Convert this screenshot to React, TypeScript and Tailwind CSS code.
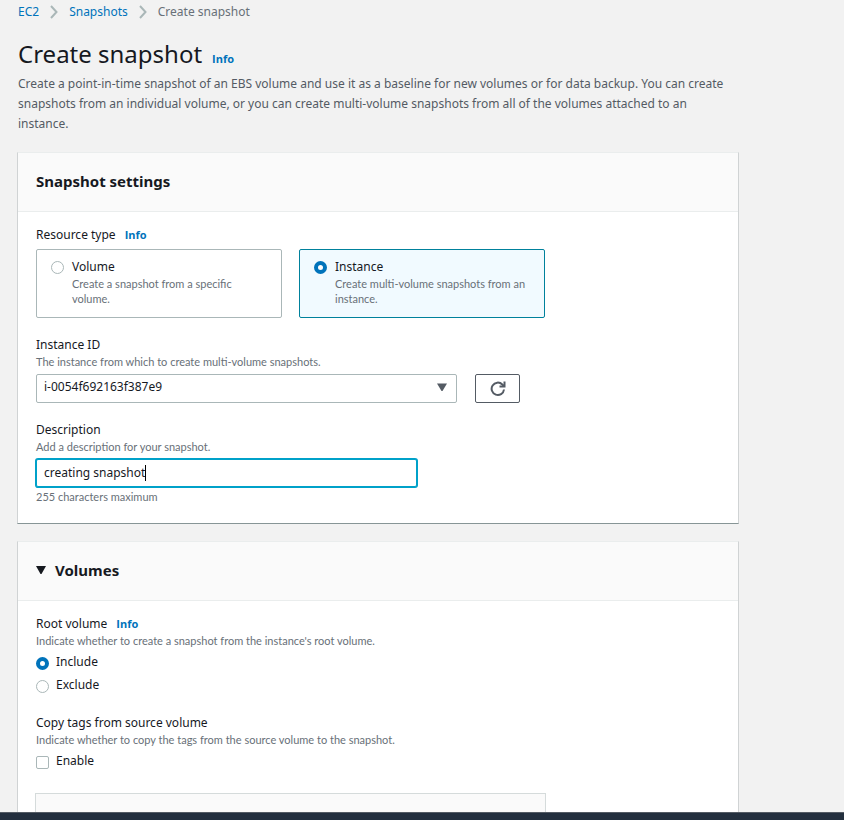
import { useState, type ReactNode } from "react";

function Info() {
  return (
    <a href="#info" className="font-['Open_Sans',sans-serif] text-[11px] leading-4 font-bold text-[#0073bb]">
      Info
    </a>
  );
}

function Chevron() {
  return (
    <svg aria-hidden="true" viewBox="0 0 8 14" className="h-[14px] w-2 fill-none stroke-[#aab7b8] stroke-2">
      <path d="M1 1l5.5 6L1 13" />
    </svg>
  );
}

function Hint({ children }: { children: ReactNode }) {
  return (
    <p className="font-['Lato',sans-serif] text-[11px] leading-[15px] text-[#687078]">{children}</p>
  );
}

const radioClass =
  "m-0 size-[13px] shrink-0 appearance-none rounded-full border border-[#aab7b8] bg-white checked:border-4 checked:border-[#0073bb]";

type TileProps = {
  title: string;
  hint: string;
  checked: boolean;
  onSelect: () => void;
};

function Tile({ title, hint, checked, onSelect }: TileProps) {
  return (
    <label
      className={
        checked
          ? "flex h-[69px] flex-1 gap-2 rounded-xs border border-[#00819c] bg-[#f1faff] py-2 pr-3 pl-[14px]"
          : "flex h-[69px] flex-1 gap-2 rounded-xs border border-[#aab7b8] bg-white py-2 pr-3 pl-[14px]"
      }
    >
      <span className="flex h-4 items-end">
        <input type="radio" name="resource" className={radioClass} checked={checked} onChange={onSelect} />
      </span>
      <span>
        <span className="block leading-[18px]">{title}</span>
        <span className="block font-['Lato',sans-serif] text-[11px] leading-[15px] text-[#687078]">{hint}</span>
      </span>
    </label>
  );
}

const cardClass =
  "border border-t-[#eaeded] border-r-[#d0d3d4] border-b-[#879596] border-l-[#d0d3d4] bg-white";
const headClass = "flex h-[59px] items-center border-b border-[#eaeded] bg-[#fafafa] px-[18px] pb-[3px]";

export default function App() {
  const [resource, setResource] = useState("instance");
  const [root, setRoot] = useState("include");
  const [description, setDescription] = useState("creating snapshot");

  return (
    <div className="flex h-screen flex-col bg-[#f2f2f2] font-['Noto_Sans',sans-serif] text-[12px] leading-[18px] text-[#16191f]">
      <div className="min-h-0 flex-1 overflow-hidden">
        <main className="mr-[105px] ml-[17px] pt-[3px]">
          <nav aria-label="Breadcrumb" className="flex items-center gap-[11px] pl-px text-[#687078]">
            <a href="#ec2" className="text-[#0073bb]">EC2</a>
            <Chevron />
            <a href="#snapshots" className="text-[#0073bb]">Snapshots</a>
            <Chevron />
            <span>Create snapshot</span>
          </nav>
          <header className="pt-[15px] pl-px">
            <div className="flex items-baseline gap-[10px]">
              <h1 className="text-[24px] leading-9">Create snapshot</h1>
              <Info />
            </div>
            <p className="mt-[2px] leading-[20px] text-[#545b64]">
              Create a point-in-time snapshot of an EBS volume and use it as a baseline for new volumes or for data
              backup. You can create snapshots from an individual volume, or you can create multi-volume snapshots from
              all of the volumes attached to an instance.
            </p>
          </header>

          <section className={`${cardClass} mt-[18px]`}>
            <div className={headClass}>
              <h2 className="text-[15px] font-bold">Snapshot settings</h2>
            </div>
            <div className="px-[18px] pt-[14px] pb-[19px]">
              <fieldset>
                <legend className="flex items-baseline gap-[9px]">
                  Resource type <Info />
                </legend>
                <div className="mt-[5px] flex max-w-[509px] gap-[17px]">
                  <Tile
                    title="Volume"
                    hint="Create a snapshot from a specific volume."
                    checked={resource === "volume"}
                    onSelect={() => setResource("volume")}
                  />
                  <Tile
                    title="Instance"
                    hint="Create multi-volume snapshots from an instance."
                    checked={resource === "instance"}
                    onSelect={() => setResource("instance")}
                  />
                </div>
              </fieldset>

              <div className="mt-[18px]">
                <label htmlFor="instance">Instance ID</label>
                <Hint>The instance from which to create multi-volume snapshots.</Hint>
                <div className="mt-[5px] flex gap-[18px]">
                  <div className="relative w-[421px]">
                    <select
                      id="instance"
                      className="block h-[29px] w-full appearance-none rounded-xs border border-[#aab7b8] bg-white pr-7 pb-[3px] pl-[7px]"
                    >
                      <option>i-0054f692163f387e9</option>
                    </select>
                    <svg
                      aria-hidden="true"
                      viewBox="0 0 10 8"
                      className="pointer-events-none absolute top-[9px] right-[10px] h-2 w-[10px] fill-[#545b64]"
                    >
                      <path d="M0 .5h10L5.500 8h-1z" />
                    </svg>
                  </div>
                  <button
                    type="button"
                    aria-label="Refresh"
                    className="flex h-[29px] w-[45px] items-center justify-center rounded-xs border border-[#545b64] bg-white"
                  >
                    <svg viewBox="0 0 16 16" className="size-4 fill-none stroke-[#545b64] stroke-2">
                      <path d="M14 8.500A6.200 6.200 0 1 1 12.300 3.500L14 5" />
                      <path d="M14.500 .5V5.500H9.500" />
                    </svg>
                  </button>
                </div>
              </div>

              <div className="mt-[18px]">
                <label htmlFor="description">Description</label>
                <Hint>Add a description for your snapshot.</Hint>
                <div className="relative mt-[5px] w-[381px]">
                  <input
                    id="description"
                    type="text"
                    maxLength={255}
                    value={description}
                    onChange={(e) => setDescription(e.target.value)}
                    className="block h-[28px] w-full rounded-xs border border-[#00a1c9] bg-white px-[7px] pb-px ring-1 ring-[#00a1c9] outline-none"
                  />
                  <span aria-hidden="true" className="absolute top-[6px] left-[109px] h-4 w-px bg-black" />
                </div>
                <div className="mt-[2px]">
                  <Hint>255 characters maximum</Hint>
                </div>
              </div>
            </div>
          </section>

          <section className={`${cardClass} mt-[17px]`}>
            <div className={headClass}>
              <h2 className="text-[15px] font-bold">
                <button type="button" className="flex items-center gap-[9px]">
                  <svg aria-hidden="true" viewBox="0 0 10 8" className="h-2 w-[10px] fill-[#16191f]">
                    <path d="M0 0h10L5.500 8h-1z" />
                  </svg>
                  Volumes
                </button>
              </h2>
            </div>
            <div className="px-[18px] pt-[14px]">
              <fieldset>
                <legend className="flex items-baseline gap-[9px]">
                  Root volume <Info />
                </legend>
                <Hint>Indicate whether to create a snapshot from the instance's root volume.</Hint>
                <div className="mt-[5px] flex flex-col gap-[5px]">
                  <label className="flex items-end gap-[7px]">
                    <input
                      type="radio"
                      name="root"
                      className={`${radioClass} mb-px`}
                      checked={root === "include"}
                      onChange={() => setRoot("include")}
                    />
                    Include
                  </label>
                  <label className="flex items-end gap-[7px]">
                    <input
                      type="radio"
                      name="root"
                      className={`${radioClass} mb-px`}
                      checked={root === "exclude"}
                      onChange={() => setRoot("exclude")}
                    />
                    Exclude
                  </label>
                </div>
              </fieldset>
              <fieldset className="mt-5">
                <legend>Copy tags from source volume</legend>
                <Hint>Indicate whether to copy the tags from the source volume to the snapshot.</Hint>
                <label className="mt-[5px] flex items-end gap-[7px]">
                  <input
                    type="checkbox"
                    className="mb-px size-[13px] appearance-none rounded-xs border border-[#aab7b8] bg-white checked:bg-[#0073bb]"
                  />
                  Enable
                </label>
              </fieldset>
              <div className="-ml-px mt-[23px] h-20 max-w-[511px] border border-[#d5dbdb] bg-[#fafafa]" />
            </div>
          </section>
        </main>
      </div>
      <footer className="h-2 shrink-0 border-t border-[#545b64] bg-[#232f3e]" />
    </div>
  );
}
